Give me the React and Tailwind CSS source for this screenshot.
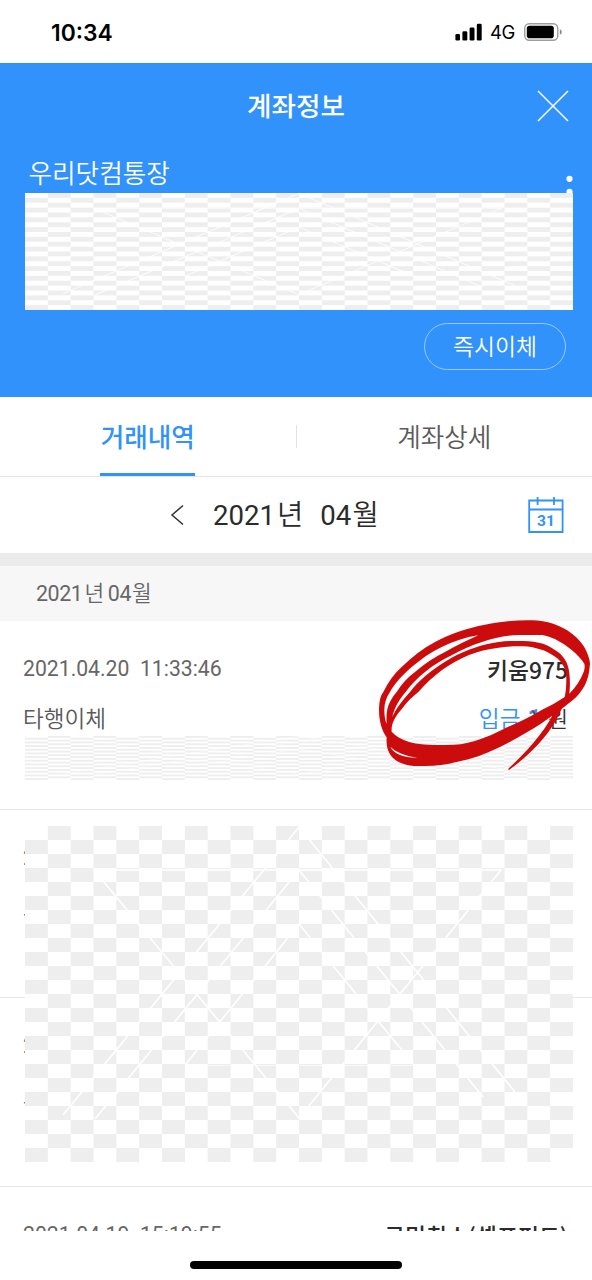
import clsx from 'clsx';

const CELLS = Array.from({ length: 24 * 24 }, (_, i) => ({ col: i % 24, row: Math.floor(i / 24) })).filter(
  ({ col, row }) => (col + row) % 2 === 1
);

// Checkerboard cover with faint white construction lines, stretched to its box.
function Checker({ className }) {
  return (
    <svg viewBox="0 0 548 336" preserveAspectRatio="none" className={className} aria-hidden="true">
      <rect width="548" height="336" fill="#fff" />
      {CELLS.map(({ col, row }) => (
        <rect
          key={`${col}-${row}`}
          x={(col * 548) / 24}
          y={row * 14}
          width={548 / 24}
          height="14"
          fill="#eee"
        />
      ))}
      <g fill="none" stroke="#fff" strokeWidth="1.6">
        <path d="M274 1 38 289M274 44 70 293M274 98 160 239" />
        <path d="M274 1 490 266M274 44 458 271M274 98 389 239" />
        <path d="M69 44 274 292 476 44Z" />
        <path d="M160 239.5H389" strokeDasharray="1.5 1" strokeWidth="1.2" />
      </g>
    </svg>
  );
}

function StatusBar() {
  return (
    <div className="flex h-[63px] shrink-0 items-start justify-between pl-[51px] pr-[30px] pt-[18px] font-['Inter',sans-serif] text-black">
      <span className="text-[22.8px] font-semibold leading-[29px]">10:34</span>
      <div className="flex items-center gap-[8px]">
        <svg width="27" height="18" viewBox="0 0 27 18" fill="#000" className="mb-[2px]">
          <rect x="0.4" y="11" width="4.6" height="6.5" rx="1.3" />
          <rect x="7.4" y="8.3" width="4.9" height="9.2" rx="1.3" />
          <rect x="14.6" y="4.5" width="4.9" height="13" rx="1.3" />
          <rect x="21.8" y="0.7" width="4.9" height="16.8" rx="1.3" />
        </svg>
        <span className="w-[26px] text-[18.5px] leading-[29px] tracking-[-0.4px]">4G</span>
        <svg width="38" height="18" viewBox="0 0 38 18" className="mb-[2px]">
          <rect x="0.75" y="0.75" width="33" height="16.5" rx="4.5" fill="none" stroke="#9d9d9d" strokeWidth="1.4" />
          <rect x="2.8" y="2.8" width="27" height="12.4" rx="2.8" fill="#000" />
          <path d="M35.8 6.2c1.6.5 2 1.6 2 2.8s-.4 2.3-2 2.8z" fill="#8e8e8e" />
        </svg>
      </div>
    </div>
  );
}

function Header() {
  return (
    <header className="flex h-[334px] shrink-0 flex-col bg-[#3092fa] text-white">
      <div className="grid h-[86px] grid-cols-[1fr_auto_1fr] items-center px-[23px]">
        <span />
        <h1 className="pt-[3px] text-[26.6px] font-medium leading-none">계좌정보</h1>
        <svg width="32" height="32" viewBox="0 0 32 32" className="justify-self-end" aria-label="닫기">
          <path d="M1 1l30 30M31 1L1 31" stroke="#fff" strokeWidth="1.5" fill="none" />
        </svg>
      </div>
      <div className="flex h-[44px] items-start justify-between pl-[28.5px] pr-[19px]">
        <span className="pt-[7px] text-[25.6px] font-[350] leading-[36px]">우리닷컴통장</span>
        <svg width="7" height="20" viewBox="0 0 7 20" className="mt-[26px]" fill="#fff">
          <circle cx="3.5" cy="3.8" r="3.1" />
          <circle cx="3.5" cy="16.8" r="3.1" />
        </svg>
      </div>
      <Checker className="ml-[25px] block h-[117px] w-[548px]" />
      <button className="mr-[26px] mt-[13px] flex h-[47px] w-[142px] items-center justify-center self-end rounded-full border-[1.5px] border-white/50 pt-[3px] text-[22.8px] font-[350] leading-none">
        즉시이체
      </button>
    </header>
  );
}

function Tabs() {
  return (
    <div className="flex h-[80px] shrink-0 items-stretch border-b border-[#e6e6e6]">
      <div className="flex flex-1 justify-center">
        <div className="flex w-[95px] items-center justify-center border-b-[3px] border-[#3092fa] pt-[7px] text-[25.6px] font-medium leading-none text-[#3092fa]">
          <span className="whitespace-nowrap">거래내역</span>
        </div>
      </div>
      <div className="mt-[28px] h-[23px] w-px bg-[#e3e3e3]" />
      <div className="flex flex-1 items-center justify-center pt-[4px] text-[25.6px] font-[350] leading-none text-[#5a5a5a]">
        계좌상세
      </div>
    </div>
  );
}

function MonthPicker() {
  return (
    <div className="flex h-[76px] shrink-0 items-center pl-[170px] pr-[28px] text-[#2b2b2b]">
      <svg width="15" height="22" viewBox="0 0 15 22" fill="none" stroke="#333" strokeWidth="1.5">
        <path d="M13 1.5 2 11l11 9.5" />
      </svg>
      <div className="ml-[28px] flex items-baseline text-[27.6px] leading-none">
        <span>2021</span>
        <span className="ml-[2px] text-[28.6px] font-[350]">년</span>
        <span className="ml-[17px]">04</span>
        <span className="ml-px text-[28.6px] font-[350]">월</span>
      </div>
      <svg width="36" height="38" viewBox="0 0 36 38" className="ml-auto" fill="none" stroke="#3092fa" strokeWidth="1.8">
        <path d="M1.2 4.5h33.4V36H1.2zM1.2 13.5h33.4M9.6 1v8M26 1v8" />
        <text
          x="18"
          y="30"
          textAnchor="middle"
          fill="#3092fa"
          stroke="none"
          className="font-['Roboto',sans-serif] text-[15.5px] font-bold"
        >
          31
        </text>
      </svg>
    </div>
  );
}

function Row({ date, kind, name, amount, className }) {
  return (
    <div className={clsx('flex shrink-0 flex-col border-b border-[#e6e6e6] px-[23px] pt-[28px]', className)}>
      <div className="flex h-[40px] items-center justify-between">
        <span className="whitespace-pre text-[21.2px] text-[#666]">{date}</span>
        <span className="mr-px pt-[2px] font-['Noto_Sans_CJK_KR',sans-serif] text-[22.8px] font-medium text-[#2b2b2b]">
          {name}
        </span>
      </div>
      <div className="mt-[11px] flex h-[40px] items-center justify-between text-[22.6px] font-[350] text-[#5a5a5a]">
        <span>{kind}</span>
        {amount && (
          <span className="mr-px flex items-center text-[#3092fa]">
            입금
            <b className="mb-[4px] ml-[7px] text-[24px] font-bold">{amount}</b>
            <span className="ml-[7px] text-[21.5px] text-[#333]">원</span>
          </span>
        )}
      </div>
    </div>
  );
}

// Hand-drawn red marker loop around the deposit.
function MarkerLoop() {
  return (
    <svg
      width="232"
      height="200"
      viewBox="0 0 696 600"
      fill="#cc0c0c"
      className="pointer-events-none absolute left-[360px] top-[-21px]"
      aria-hidden="true"
    >
      <path
        fillRule="evenodd"
        d="M57 330C58 305 60 290 70 276C84 247 103 221 125 201C155 172 188 146 225 126C272 101 322 84 375 74C420 65 468 60 516 61C560 62 602 75 636 101C656 117 672 134 680 155C690 178 691 190 689 200C687 240 668 277 636 302C575 352 515 391 445 428C405 449 365 467 325 478C280 490 237 498 195 498C165 499 142 498 125 490C105 482 90 468 84 450C80 438 79 426 80 412C66 394 57 362 57 330Z
        M73 330C73 350 76 363 80 372C79 356 79 342 82 328C86 310 96 292 110 276C125 252 143 232 165 216C193 192 222 172 255 156C287 137 320 122 355 106C316 112 280 124 245 141C212 157 182 178 155 201C130 223 105 248 90 276C79 292 73 310 73 330Z
        M97 350C104 320 120 296 137 276C153 254 173 234 195 216C220 196 247 179 275 166C303 150 333 136 366 126C402 114 438 106 476 105L546 105C561 107 574 112 586 118C604 127 621 138 636 151C652 164 664 178 673 191C675 200 674 208 671 216C662 240 647 262 628 281C630 264 630 247 629 231C628 211 624 194 616 181C608 168 599 158 586 151C571 139 554 131 536 128C516 123 496 123 476 123C456 122 436 123 416 126C367 132 320 150 275 173C246 189 219 208 195 229C178 244 163 259 150 276C127 301 108 326 97 350Z
        M95 395C93 372 105 350 123 330C137 310 154 293 175 276C197 251 220 230 245 211C270 193 297 178 325 166C353 154 384 147 416 143C436 140 456 139 476 139C494 139 511 140 526 144C544 148 561 154 576 164C589 171 600 180 606 191C615 203 619 219 619 236C619 256 618 274 614 291C592 306 569 319 545 330C512 350 480 366 445 380C412 397 379 412 345 423C313 433 280 436 245 435C208 435 174 434 145 425C124 418 106 408 95 395Z
        M91 440C100 461 132 474 172 473C138 468 108 457 91 440Z"
      />
      <path d="M614 308L590 320C562 385 510 446 444 507L447 510C520 457 570 400 596 346Z" />
      <path d="M514 330C520 328 526 338 530 356L525 357C524 346 520 337 514 330Z" />
    </svg>
  );
}

export default function App() {
  return (
    <div className="flex h-[1280px] w-[592px] flex-col overflow-hidden bg-white font-['Roboto','Noto_Sans_CJK_KR',sans-serif]">
      <StatusBar />
      <Header />
      <Tabs />
      <MonthPicker />
      <div className="h-[13px] shrink-0 bg-[#ebebeb]" />
      <div className="flex h-[55px] shrink-0 items-center bg-[#f7f7f7] pl-[36px] pt-[2px] text-[21.4px] tracking-[-0.4px] text-[#666]">
        <span>2021</span>
        <span className="ml-[2px] font-[350]">년</span>
        <span className="ml-[4px]">04</span>
        <span className="ml-px font-[350]">월</span>
      </div>
      <div className="relative flex h-[610px] shrink-0 flex-col [clip-path:inset(-10px_0_0_0)]">
        <Row date="2021.04.20  11:33:46" kind="타행이체" name="키움975" amount="1" className="h-[189px]" />
        <Row date="2021" kind="스" className="h-[188px]" />
        <Row date="2021" kind="스" className="h-[189px]" />
        <Row date="2021.04.19  15:19:55" name="국민취소(셀프펀드)" className="h-[188px]" />
        <Checker className="absolute left-[25px] top-[115px] h-[44px] w-[548px]" />
        <Checker className="absolute left-[25px] top-[205px] h-[336px] w-[548px]" />
        <MarkerLoop />
      </div>
      <div className="mx-auto mt-[30px] h-[8px] w-[212px] shrink-0 rounded-full bg-black" />
    </div>
  );
}
